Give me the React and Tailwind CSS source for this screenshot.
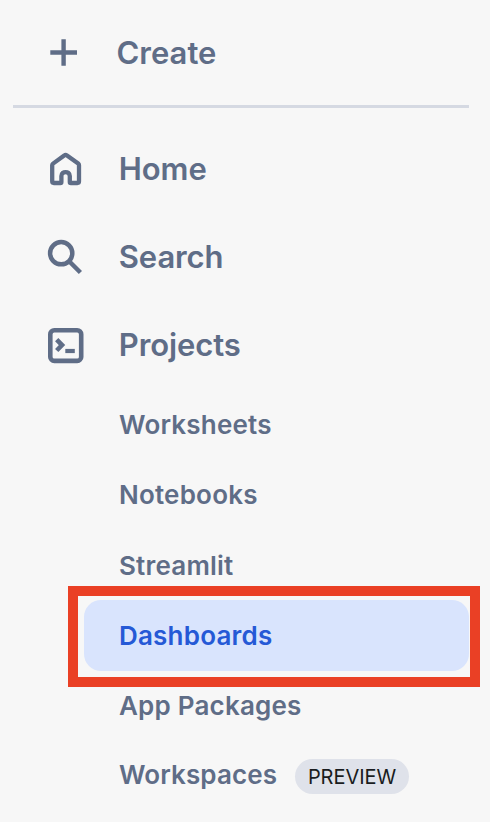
function PlusIcon() {
  return (
    <svg className="size-10 shrink-0" viewBox="0 0 40 40" fill="none" stroke="currentColor" strokeWidth="4.4">
      <path d="M4.3 19.5H31M17.6 6.2V32.8" />
    </svg>
  );
}

function HomeIcon() {
  return (
    <svg className="mt-px size-10 shrink-0" viewBox="0 0 40 40" fill="none" stroke="currentColor" strokeWidth="4.3" strokeLinejoin="round">
      <path d="M6.2 15.2Q6.2 14.2 7 13.6L18.2 5.5Q19.6 4.6 21 5.5L32.2 13.6Q33 14.2 33 15.2V31.3Q33 33 31.3 33H24.9Q23.8 33 23.8 31.9V26C23.8 20.7 15.4 20.7 15.4 26V31.9Q15.4 33 14.3 33H7.9Q6.2 33 6.2 31.3Z" />
    </svg>
  );
}

function SearchIcon() {
  return (
    <svg className="size-10 shrink-0" viewBox="0 0 40 40" fill="none" stroke="currentColor" strokeWidth="4.5">
      <circle cx="15.2" cy="16.2" r="11.1" />
      <path d="M22.9 24L34.4 35.5" />
    </svg>
  );
}

function ProjectsIcon() {
  return (
    <svg className="size-10 shrink-0" viewBox="0 0 40 40" fill="none" stroke="currentColor">
      <rect x="4.3" y="5.3" width="30.9" height="30.6" rx="4" strokeWidth="4.6" />
      <path d="M10.7 14.7L16 20.1L10.7 25.5" strokeWidth="4.6" />
      <path d="M19.3 26H28.8" strokeWidth="4.2" />
    </svg>
  );
}

const sections = [
  { label: "Home", Icon: HomeIcon },
  { label: "Search", Icon: SearchIcon },
  { label: "Projects", Icon: ProjectsIcon },
];

function SubItem({ className, children }) {
  return (
    <a className={`flex items-center rounded-[17px] pl-[35px] text-[26px] leading-8 tracking-[0.2px] ${className}`}>
      {children}
    </a>
  );
}

export default function App() {
  return (
    <nav className="h-[822px] w-[490px] overflow-hidden bg-[#f7f7f7] font-['Inter',sans-serif] font-semibold text-[#5f6d87]">
      <button className="flex h-[105px] w-full items-center gap-[30.5px] pl-[46px] text-[31px]">
        <PlusIcon />
        <span className="pt-0.5">Create</span>
      </button>
      <div className="ml-[13px] h-[3px] w-[456px] bg-[#d5d9e2]" />
      <div className="pt-[17px]">
        {sections.map(({ label, Icon }) => (
          <a key={label} className="flex h-[88px] items-center gap-[32.8px] pl-[46px] text-[31px] tracking-[-0.1px]">
            <Icon />
            <span>{label}</span>
          </a>
        ))}
      </div>
      <div className="flex flex-col pl-[84px] pr-[21px]">
        <SubItem className="h-[71px]">Worksheets</SubItem>
        <SubItem className="h-[70px]">Notebooks</SubItem>
        <SubItem className="h-[70px] pt-0.5">Streamlit</SubItem>
        <div className="relative">
          <SubItem className="h-[71px] bg-[#d9e4fd] text-[#2559d6]">Dashboards</SubItem>
          <div className="pointer-events-none absolute -bottom-4 -left-4 -right-[11px] -top-3.5 border-10 border-[#ea4025]" />
        </div>
        <SubItem className="h-[70px]">App Packages</SubItem>
        <SubItem className="h-[70px]">
          <span className="w-[158px] pb-0.5 tracking-[0.1px]">Workspaces</span>
          <span className="ml-[18px] mt-px flex h-[35px] w-[114px] items-center justify-center rounded-full bg-[#dfe2ea] text-[20px] font-normal tracking-[-0.05px] text-[#191c20]">
            PREVIEW
          </span>
        </SubItem>
      </div>
    </nav>
  );
}
